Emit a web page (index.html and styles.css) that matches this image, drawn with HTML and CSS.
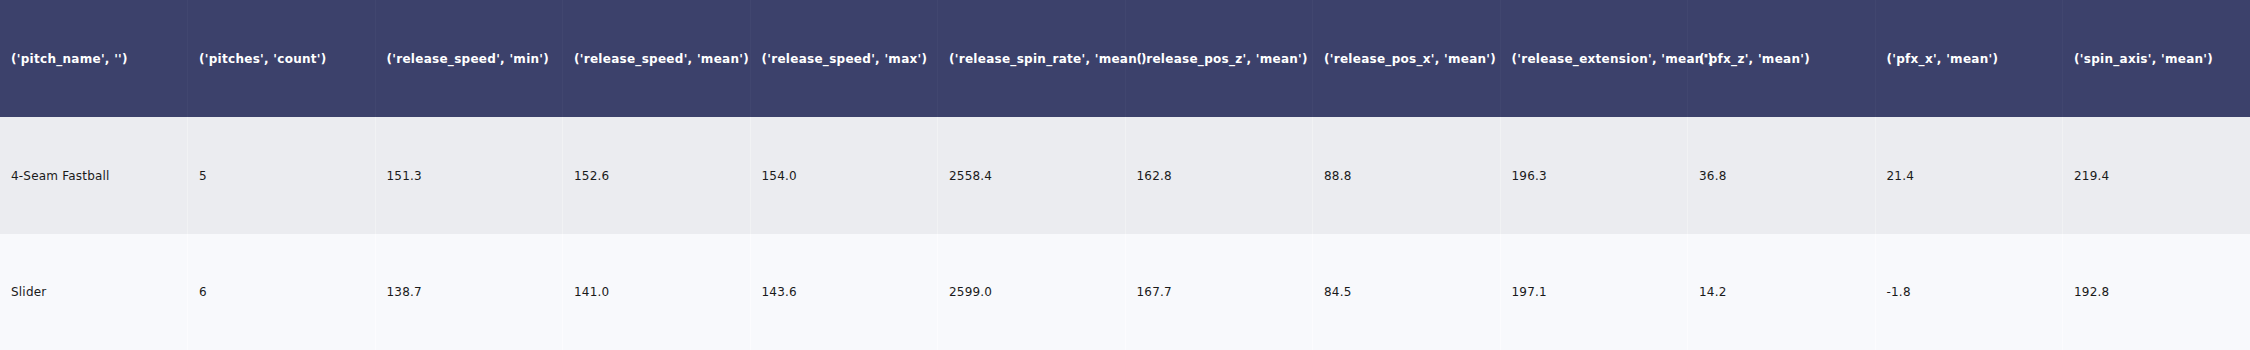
FILE: index.html
```html
<!DOCTYPE html>
<html lang="en">
<head>
  <meta charset="UTF-8">
  <meta name="viewport" content="width=device-width, initial-scale=1.0">
  <title>Pitch summary</title>
  <link rel="stylesheet" href="styles.css">
</head>
<body>
  <table class="pitch-table">
    <thead>
      <tr>
        <th>('pitch_name', '')</th>
        <th>('pitches', 'count')</th>
        <th>('release_speed', 'min')</th>
        <th>('release_speed', 'mean')</th>
        <th>('release_speed', 'max')</th>
        <th>('release_spin_rate', 'mean')</th>
        <th>('release_pos_z', 'mean')</th>
        <th>('release_pos_x', 'mean')</th>
        <th>('release_extension', 'mean')</th>
        <th>('pfx_z', 'mean')</th>
        <th>('pfx_x', 'mean')</th>
        <th>('spin_axis', 'mean')</th>
      </tr>
    </thead>
    <tbody>
      <tr class="odd">
        <td>4-Seam Fastball</td>
        <td>5</td>
        <td>151.3</td>
        <td>152.6</td>
        <td>154.0</td>
        <td>2558.4</td>
        <td>162.8</td>
        <td>88.8</td>
        <td>196.3</td>
        <td>36.8</td>
        <td>21.4</td>
        <td>219.4</td>
      </tr>
      <tr class="even">
        <td>Slider</td>
        <td>6</td>
        <td>138.7</td>
        <td>141.0</td>
        <td>143.6</td>
        <td>2599.0</td>
        <td>167.7</td>
        <td>84.5</td>
        <td>197.1</td>
        <td>14.2</td>
        <td>-1.8</td>
        <td>192.8</td>
      </tr>
    </tbody>
  </table>
</body>
</html>
```

FILE: styles.css
```css
:root {
  --header-navy: #3c416b;
  --row-grey: #ebecf0;
  --row-light: #f8f9fc;
  --text-dark: #1a1a1a;
}

body {
  margin: 0;
  padding: 0;
  background-color: white;
  font-family: 'DejaVu Sans', Verdana, sans-serif;
  font-size: 12px;
  overflow: hidden;
}

.pitch-table {
  width: 2250px;
  table-layout: fixed;
  border-collapse: collapse;
  border-spacing: 0;
}

.pitch-table th,
.pitch-table td {
  box-sizing: border-box;
  height: 117px;
  padding: 0 0 0 11px;
  text-align: left;
  vertical-align: middle;
  white-space: nowrap;
  overflow: visible;
  border-left: 1px solid #41466f;
}

.pitch-table th {
  background-color: var(--header-navy);
  color: white;
  font-weight: bold;
  letter-spacing: 0.28px;
}

.pitch-table td {
  color: var(--text-dark);
  letter-spacing: 0.2px;
}

.pitch-table th:first-child,
.pitch-table td:first-child {
  border-left: none;
}

.odd td {
  background-color: var(--row-grey);
  border-left-color: #f1f2f4;
}

.even td {
  height: 116px;
  background-color: var(--row-light);
  border-left-color: #fcfcfe;
}
```
